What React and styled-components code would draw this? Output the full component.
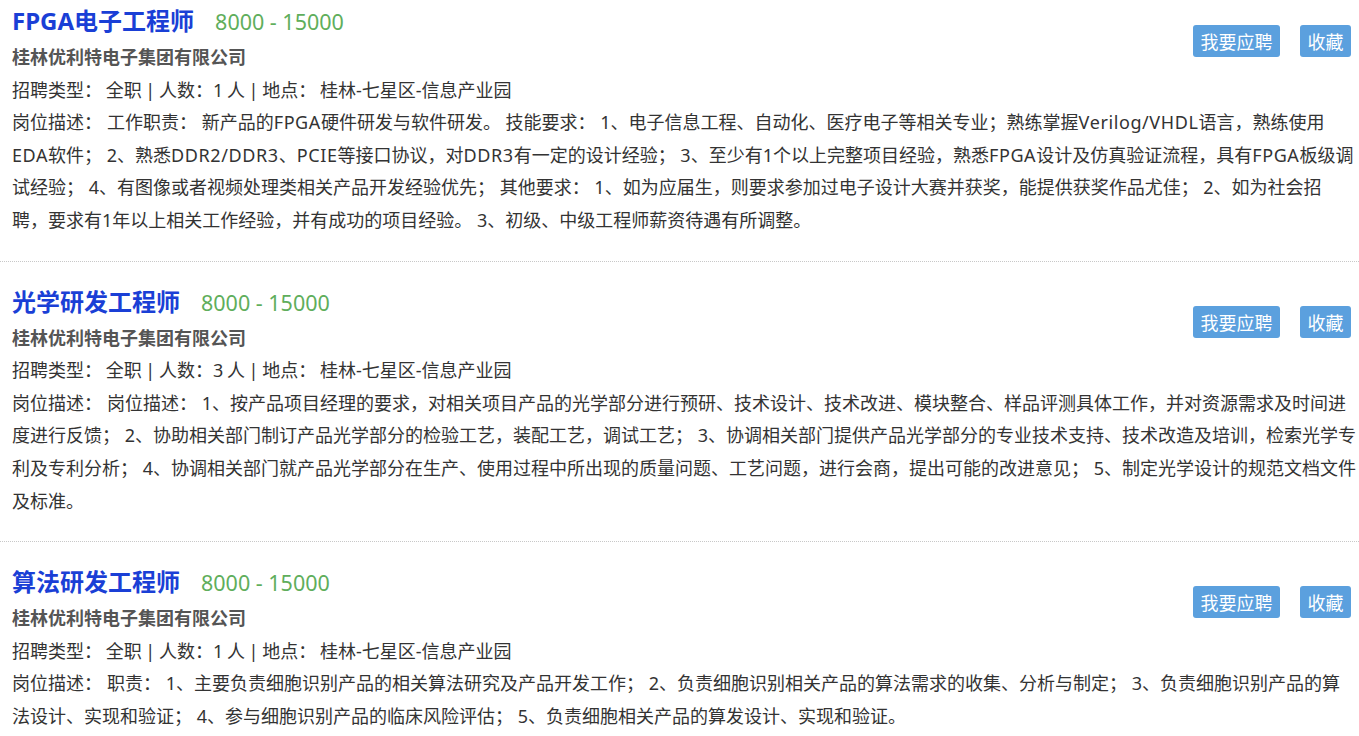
import React from "react";
import styled, { createGlobalStyle } from "styled-components";

const Global = createGlobalStyle`
  html, body { margin: 0; padding: 0; background: #fff; }
  body { font-family: "Noto Sans", "Noto Sans CJK SC", sans-serif; color: #333; overflow: hidden; }
`;

const List = styled.div`
  display: flex;
  flex-direction: column;
  width: 1359px;
`;

const Item = styled.div`
  padding: ${(p) => (p.$first ? "3px" : "22px")} 0 24px 12px;
  border-bottom: 1px dotted #c8c8c8;
`;

const Head = styled.div`
  display: flex;
  justify-content: space-between;
  align-items: flex-start;
`;

const HeadInfo = styled.div`
  display: flex;
  flex-direction: column;
`;

const TitleRow = styled.div`
  display: flex;
  align-items: baseline;
  gap: 21px;
  height: 36px;
  line-height: 36px;
  margin-bottom: 2px;
`;

const Title = styled.a`
  font-size: 24px;
  font-weight: 700;
  color: #1a3fd6;
  text-decoration: none;
`;

const Salary = styled.span`
  font-size: 21.5px;
  color: #5fae5c;
`;

const Company = styled.div`
  font-size: 18px;
  font-weight: 700;
  color: #555;
  line-height: 32.6px;
`;

const Meta = styled.div`
  font-size: 18px;
  line-height: 32.6px;
  color: #333;
  word-spacing: -1px;
`;

const Actions = styled.div`
  display: flex;
  gap: 20px;
  margin-top: 22px;
  margin-right: 8px;
`;

const Btn = styled.button`
  height: 32px;
  padding: 0 7.5px;
  border: none;
  border-radius: 3px;
  background: #5ba0de;
  color: #fff;
  font-family: "Noto Sans CJK SC", sans-serif;
  font-size: 18px;
  line-height: 32px;
  cursor: pointer;
`;

const Desc = styled.div`
  font-size: 18px;
  line-height: 32.6px;
  color: #333;
  padding-right: 1.5px;
  text-spacing-trim: normal;
`;

const Label = styled.span`
  margin-right: 5px;
`;

const Latin = styled.span`
  letter-spacing: 0.6px;
`;

const jobs = [
  {
    title: "FPGA电子工程师",
    count: 1,
    desc:
      "工作职责： 新产品的FPGA硬件研发与软件研发。 技能要求： 1、电子信息工程、自动化、医疗电子等相关专业；熟练掌握Verilog/VHDL语言，熟练使用EDA软件； 2、熟悉DDR2/DDR3、PCIE等接口协议，对DDR3有一定的设计经验； 3、至少有1个以上完整项目经验，熟悉FPGA设计及仿真验证流程，具有FPGA板级调试经验； 4、有图像或者视频处理类相关产品开发经验优先； 其他要求： 1、如为应届生，则要求参加过电子设计大赛并获奖，能提供获奖作品尤佳； 2、如为社会招聘，要求有1年以上相关工作经验，并有成功的项目经验。 3、初级、中级工程师薪资待遇有所调整。",
  },
  {
    title: "光学研发工程师",
    count: 3,
    desc:
      "岗位描述： 1、按产品项目经理的要求，对相关项目产品的光学部分进行预研、技术设计、技术改进、模块整合、样品评测具体工作，并对资源需求及时间进度进行反馈； 2、协助相关部门制订产品光学部分的检验工艺，装配工艺，调试工艺； 3、协调相关部门提供产品光学部分的专业技术支持、技术改造及培训，检索光学专利及专利分析； 4、协调相关部门就产品光学部分在生产、使用过程中所出现的质量问题、工艺问题，进行会商，提出可能的改进意见； 5、制定光学设计的规范文档文件及标准。",
  },
  {
    title: "算法研发工程师",
    count: 1,
    desc:
      "职责： 1、主要负责细胞识别产品的相关算法研究及产品开发工作； 2、负责细胞识别相关产品的算法需求的收集、分析与制定； 3、负责细胞识别产品的算法设计、实现和验证； 4、参与细胞识别产品的临床风险评估； 5、负责细胞相关产品的算发设计、实现和验证。",
  },
];

function renderDesc(text) {
  return text
    .split(/([A-Za-z][A-Za-z0-9/]*)/)
    .map((part, i) => (i % 2 === 1 ? <Latin key={i}>{part}</Latin> : part));
}

export default function App() {
  return (
    <>
      <Global />
      <List>
        {jobs.map((j, i) => (
          <Item key={i} $first={i === 0}>
            <Head>
              <HeadInfo>
                <TitleRow>
                  <Title href="#">{j.title}</Title>
                  <Salary>8000 - 15000</Salary>
                </TitleRow>
                <Company>桂林优利特电子集团有限公司</Company>
                <Meta>
                  {`招聘类型： 全职 | 人数：${j.count} 人 | 地点： 桂林-七星区-信息产业园`}
                </Meta>
              </HeadInfo>
              <Actions>
                <Btn>我要应聘</Btn>
                <Btn>收藏</Btn>
              </Actions>
            </Head>
            <Desc>
              <Label>岗位描述：</Label>
              {renderDesc(j.desc)}
            </Desc>
          </Item>
        ))}
      </List>
    </>
  );
}
